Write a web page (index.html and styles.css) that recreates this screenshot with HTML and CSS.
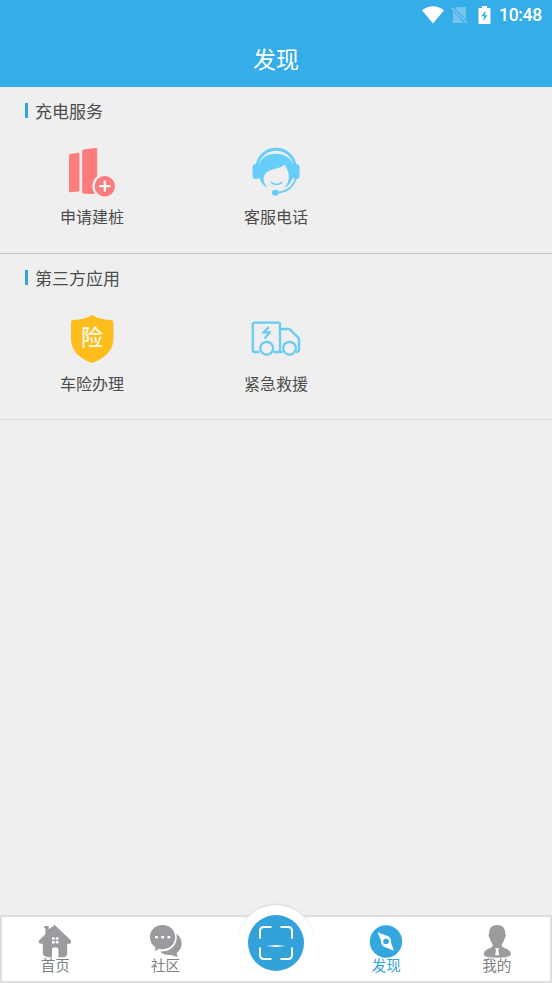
FILE: index.html
```html
<!DOCTYPE html>
<html lang="zh-CN">
<head>
<meta charset="utf-8">
<title>发现</title>
<link rel="stylesheet" href="styles.css">
</head>
<body>
<div class="app">
  <header class="header">
    <div class="status">
      <svg class="wifi" width="22" height="18" viewBox="0 0 22 18"><path fill="#fff" d="M0 4.2Q11-3.6 22 4.2L11 17.6z"/></svg>
      <svg class="sim" width="17" height="18" viewBox="0 0 17 18"><path fill="#75c4ed" d="M6 1h9v12.5L4.4 3zM2 5l11 12H2z"/><path stroke="#82caef" stroke-width="1.4" d="M.8 1.8 16 17"/></svg>
      <svg class="battery" width="13" height="18" viewBox="0 0 13 18"><path fill="#fff" d="M4 0h5v2h2.5q1 0 1 1v14q0 1-1 1h-10q-1 0-1-1V3q0-1 1-1H4z"/><path fill="#35ade8" d="M7.6 4.8 3.2 10.3h2.8L5.2 14.9l4.4-5.7H7z"/></svg>
      <span class="clock">10:48</span>
    </div>
    <h1 class="title">发现</h1>
  </header>

  <main class="content">
    <section class="group">
      <h2 class="group-title">充电服务</h2>
      <div class="grid">
        <div class="entry">
          <svg width="52" height="52" viewBox="0 0 52 52">
            <g fill="#fd7b7d">
              <path d="M3 9.5Q3 8.3 4.3 8L12.4 6.7Q13.4 6.6 13.4 7.6V44.5Q13.4 45.4 12.4 45.5L4.7 46.3Q3 46.4 3 44.8z"/>
              <path d="M16.2 5.2Q16.2 3.7 17.7 3.5L29.5 2Q31.2 1.8 31.2 3.4V30.2A12.4 12.4 0 0 0 29.2 48L17.8 47.8Q16.2 47.7 16.2 46z"/>
              <circle cx="38.8" cy="40.2" r="10.2"/>
            </g>
            <path d="M38.8 34.6v11.2M33.2 40.2h11.2" stroke="#fff" stroke-width="2.2"/>
          </svg>
          <span class="label">申请建桩</span>
        </div>
        <div class="entry">
          <svg width="52" height="52" viewBox="0 0 52 52">
            <path d="M7 19C9.5 9 17 3.3 26 3.3S42.7 9 45 19" fill="none" stroke="#67cdfa" stroke-width="3"/>
            <g fill="#67cdfa">
              <rect x="2.6" y="18" width="6.8" height="15" rx="3"/>
              <rect x="42.7" y="18" width="6.8" height="15" rx="3"/>
              <path d="M9 18.5C11.5 11.5 18 7.8 26 7.8S40.5 11.5 43 18.5V31C41.5 36 38.5 40 34.5 41.6C38 37.5 39.3 33 38.7 28.5C38.2 25.4 36.6 22 34.6 18.6C30 23.4 20.6 22.2 15.4 27.4C12.5 31 13.2 37 17.5 41.6C13.5 40 10.5 36 9 31z"/>
              <ellipse cx="25.4" cy="46.8" rx="3.4" ry="3"/>
            </g>
            <path d="M21.3 36.4Q26.5 40.6 31.7 36.4" fill="none" stroke="#67cdfa" stroke-width="1.6" stroke-linecap="round"/>
            <path d="M46 32C44 39 38.5 45.5 27.5 46.6" fill="none" stroke="#67cdfa" stroke-width="1.8"/>
          </svg>
          <span class="label">客服电话</span>
        </div>
      </div>
    </section>

    <section class="group last">
      <h2 class="group-title">第三方应用</h2>
      <div class="grid">
        <div class="entry">
          <div class="shield">
            <svg width="52" height="52" viewBox="0 0 52 52"><path fill="#fdbd1d" d="M26 2Q33 6.8 45 6.9Q47.3 7 47.4 9V26C47.2 38 38.5 45.4 26 50C13.5 45.4 5.2 38 5 26V9Q5.1 7 7.3 6.9Q19 6.8 26 2z"/></svg>
            <span class="shield-char">险</span>
          </div>
          <span class="label">车险办理</span>
        </div>
        <div class="entry">
          <svg width="52" height="52" viewBox="0 0 52 52" fill="none" stroke="#6accf5" stroke-width="2.3" stroke-linejoin="round">
            <path d="M9.6 39H4.5Q2.8 39 2.8 37.3V11.3Q2.8 9.6 4.5 9.6H28.3Q30 9.6 30 11.3V39H23.4"/>
            <path d="M30 16H39.5L49 25.5V37Q49 39 46.3 39M30 39h2.5"/>
            <circle cx="16.7" cy="35.2" r="6.4"/><circle cx="39.5" cy="35.2" r="6.4"/>
            <path d="M19 14 13.2 19.6 20 19.2 14.5 25.5" stroke-width="2.2"/>
          </svg>
          <span class="label">紧急救援</span>
        </div>
      </div>
    </section>
  </main>

  <nav class="tabs">
    <a class="tab">
      <svg width="34" height="34" viewBox="0 0 34 34"><path fill="#999b9e" d="M6.3 1h4.4v3.2L16.8 0 33 15.6Q33.8 18.8 30.4 18.8H29.2V30L26.5 32.3H20.4V24.5Q20.4 22.5 18.5 22.5H16Q14 22.5 14 24.5V32.5Q7 32.5 4.8 29.3V18.8H3Q-.3 18.2 1 15.6L7.4 9.2V3.2L6.3 3z"/><path fill="#fff" d="M14 12.2h2.6v2.6H14zM17.8 12.2h2.6v2.6h-2.6zM14 16h2.6v2.6H14zM17.8 16h2.6v2.6h-2.6z"/></svg>
      <span>首页</span>
    </a>
    <a class="tab">
      <svg width="34" height="34" viewBox="0 0 34 34"><path fill="#999b9e" d="M27.4 8.5C34.8 14.4 34 23.6 27.7 28L28.5 32.3 22.3 30Q15 30.6 10.8 26.5C21.3 27.5 29.6 19.5 27.4 8.5z"/><path fill="#999b9e" d="M13.5 0C21 0 26.2 5 26.2 12S21 24.3 13.5 24.3Q11.8 24.3 10.4 23.8L5.8 26.2 6.5 22.3C2.8 20 1 16.3 1 12 1 5 6 0 13.5 0z"/><g fill="#fff"><rect x="6" y="11" width="2.8" height="2.4"/><rect x="12.2" y="11" width="2.8" height="2.4"/><rect x="18.4" y="11" width="2.8" height="2.4"/></g></svg>
      <span>社区</span>
    </a>
    <a class="tab scan">
      <svg width="56" height="56" viewBox="0 0 56 56">
        <defs><linearGradient id="beam"><stop stop-color="#fff" stop-opacity="0"/><stop offset=".5" stop-color="#fff"/><stop offset="1" stop-color="#fff" stop-opacity="0"/></linearGradient></defs>
        <circle cx="28" cy="28" r="28" fill="#33a2da"/>
        <path d="M12 23.5V16Q12 12 16 12H23.5M32.5 12H40Q44 12 44 16V23.5M44 32.5V40Q44 44 40 44H32.5M23.5 44H16Q12 44 12 40V32.5" fill="none" stroke="#fff" stroke-width="2"/>
        <ellipse cx="28" cy="31" rx="11" ry="1.1" fill="url(#beam)"/>
      </svg>
    </a>
    <a class="tab active">
      <svg width="34" height="34" viewBox="0 0 34 34"><circle cx="17" cy="16.5" r="16.2" fill="#35a7df"/><path fill="#fff" d="M8.5 7.3 19.3 11.2Q22.6 13.6 22 17.6L25 25.7 15 21.7Q11.5 19.5 12 15.5z"/><circle cx="17" cy="16.5" r="2.8" fill="#35a7df"/></svg>
      <span>发现</span>
    </a>
    <a class="tab">
      <svg width="34" height="34" viewBox="0 0 34 34"><path fill="#999b9e" d="M17.2 0C22.6 0 25.4 3.2 25.2 8.5Q26.3 9.2 25.4 12L24.6 13.6Q23.7 17 21.8 19V21.3Q24 23.4 27.3 24.2Q30.8 25.6 30.8 30.3Q28 32.8 17.2 32.8T3.8 30.3Q3.8 25.6 7.2 24.2Q10.6 23.4 12.6 21.3V19Q10.7 17 9.8 13.6L9 12Q8.1 9.2 9.2 8.5C9 3.2 11.8 0 17.2 0z"/><path fill="#fff" d="M15.2 23.2h4l-.8 2.5 1 4.5h-4.4l1-4.5z"/></svg>
      <span>我的</span>
    </a>
  </nav>
</div>
</body>
</html>
```
FILE: styles.css
```css
* { box-sizing: border-box; }
body {
  margin: 0;
  background: #efefef;
  color: #4c4c4c;
  font-family: Roboto, "Noto Sans CJK SC", sans-serif;
}
svg { display: block; }
.app {
  display: flex;
  flex-direction: column;
  height: 983px;
}
.header {
  height: 87px;
  background: #35ade8;
  color: #fff;
}
.status {
  display: flex;
  align-items: center;
  justify-content: flex-end;
  height: 30px;
  padding-right: 10px;
}
.sim { margin-left: 7px; }
.battery { margin-left: 10px; }
.clock {
  width: 43px;
  margin-left: 8px;
  font-size: 17.5px;
  font-weight: 500;
  letter-spacing: -0.3px;
  line-height: 32px;
  white-space: nowrap;
}
.title {
  margin: 0;
  font-size: 23px;
  font-weight: 400;
  line-height: 61px;
  text-align: center;
}
.content { flex: 1; }
.group {
  height: 167px;
  border-bottom: 1px solid #c2c2c2;
}
.group.last { height: 166px; border-color: #dadada; }
.group-title {
  display: flex;
  align-items: center;
  gap: 7px;
  height: 47px;
  margin: 0;
  padding-left: 25px;
  font-size: 17px;
  font-weight: 400;
}
.group-title::before {
  content: "";
  width: 3px;
  height: 15px;
  background: #35a2dc;
}
.grid {
  display: grid;
  grid-template-columns: repeat(3, 1fr);
  padding-top: 12px;
}
.entry {
  display: flex;
  flex-direction: column;
  align-items: center;
}
.label {
  margin-top: 8px;
  font-size: 16px;
  line-height: 24px;
}
.shield { position: relative; }
.shield-char {
  position: absolute;
  inset: 0;
  color: #fff8e5;
  font-size: 22px;
  font-weight: 500;
  line-height: 49px;
  text-align: center;
}
.tabs {
  display: grid;
  grid-template-columns: 108.4px repeat(3, 110.4px) 108.4px;
  height: 68px;
  border: 2px solid #dedede;
  background: #fff;
}
.tab {
  display: flex;
  flex-direction: column;
  align-items: center;
  padding-top: 8px;
  color: #7d8085;
  font-size: 14.5px;
  line-height: 18px;
}
.tab:first-child { padding-right: 2px; }
.tab:last-child { padding-left: 2px; }
.tab span { margin-top: -1px; }
.tab.active { color: #35a2dc; }
.tab.scan {
  justify-self: center;
  width: 76px;
  height: 76px;
  margin-top: -12px;
  padding-top: 10px;
  border-radius: 50%;
  background: #fff;
  box-shadow: 0 -2px 2px -1px #d8d8d8;
}
```
